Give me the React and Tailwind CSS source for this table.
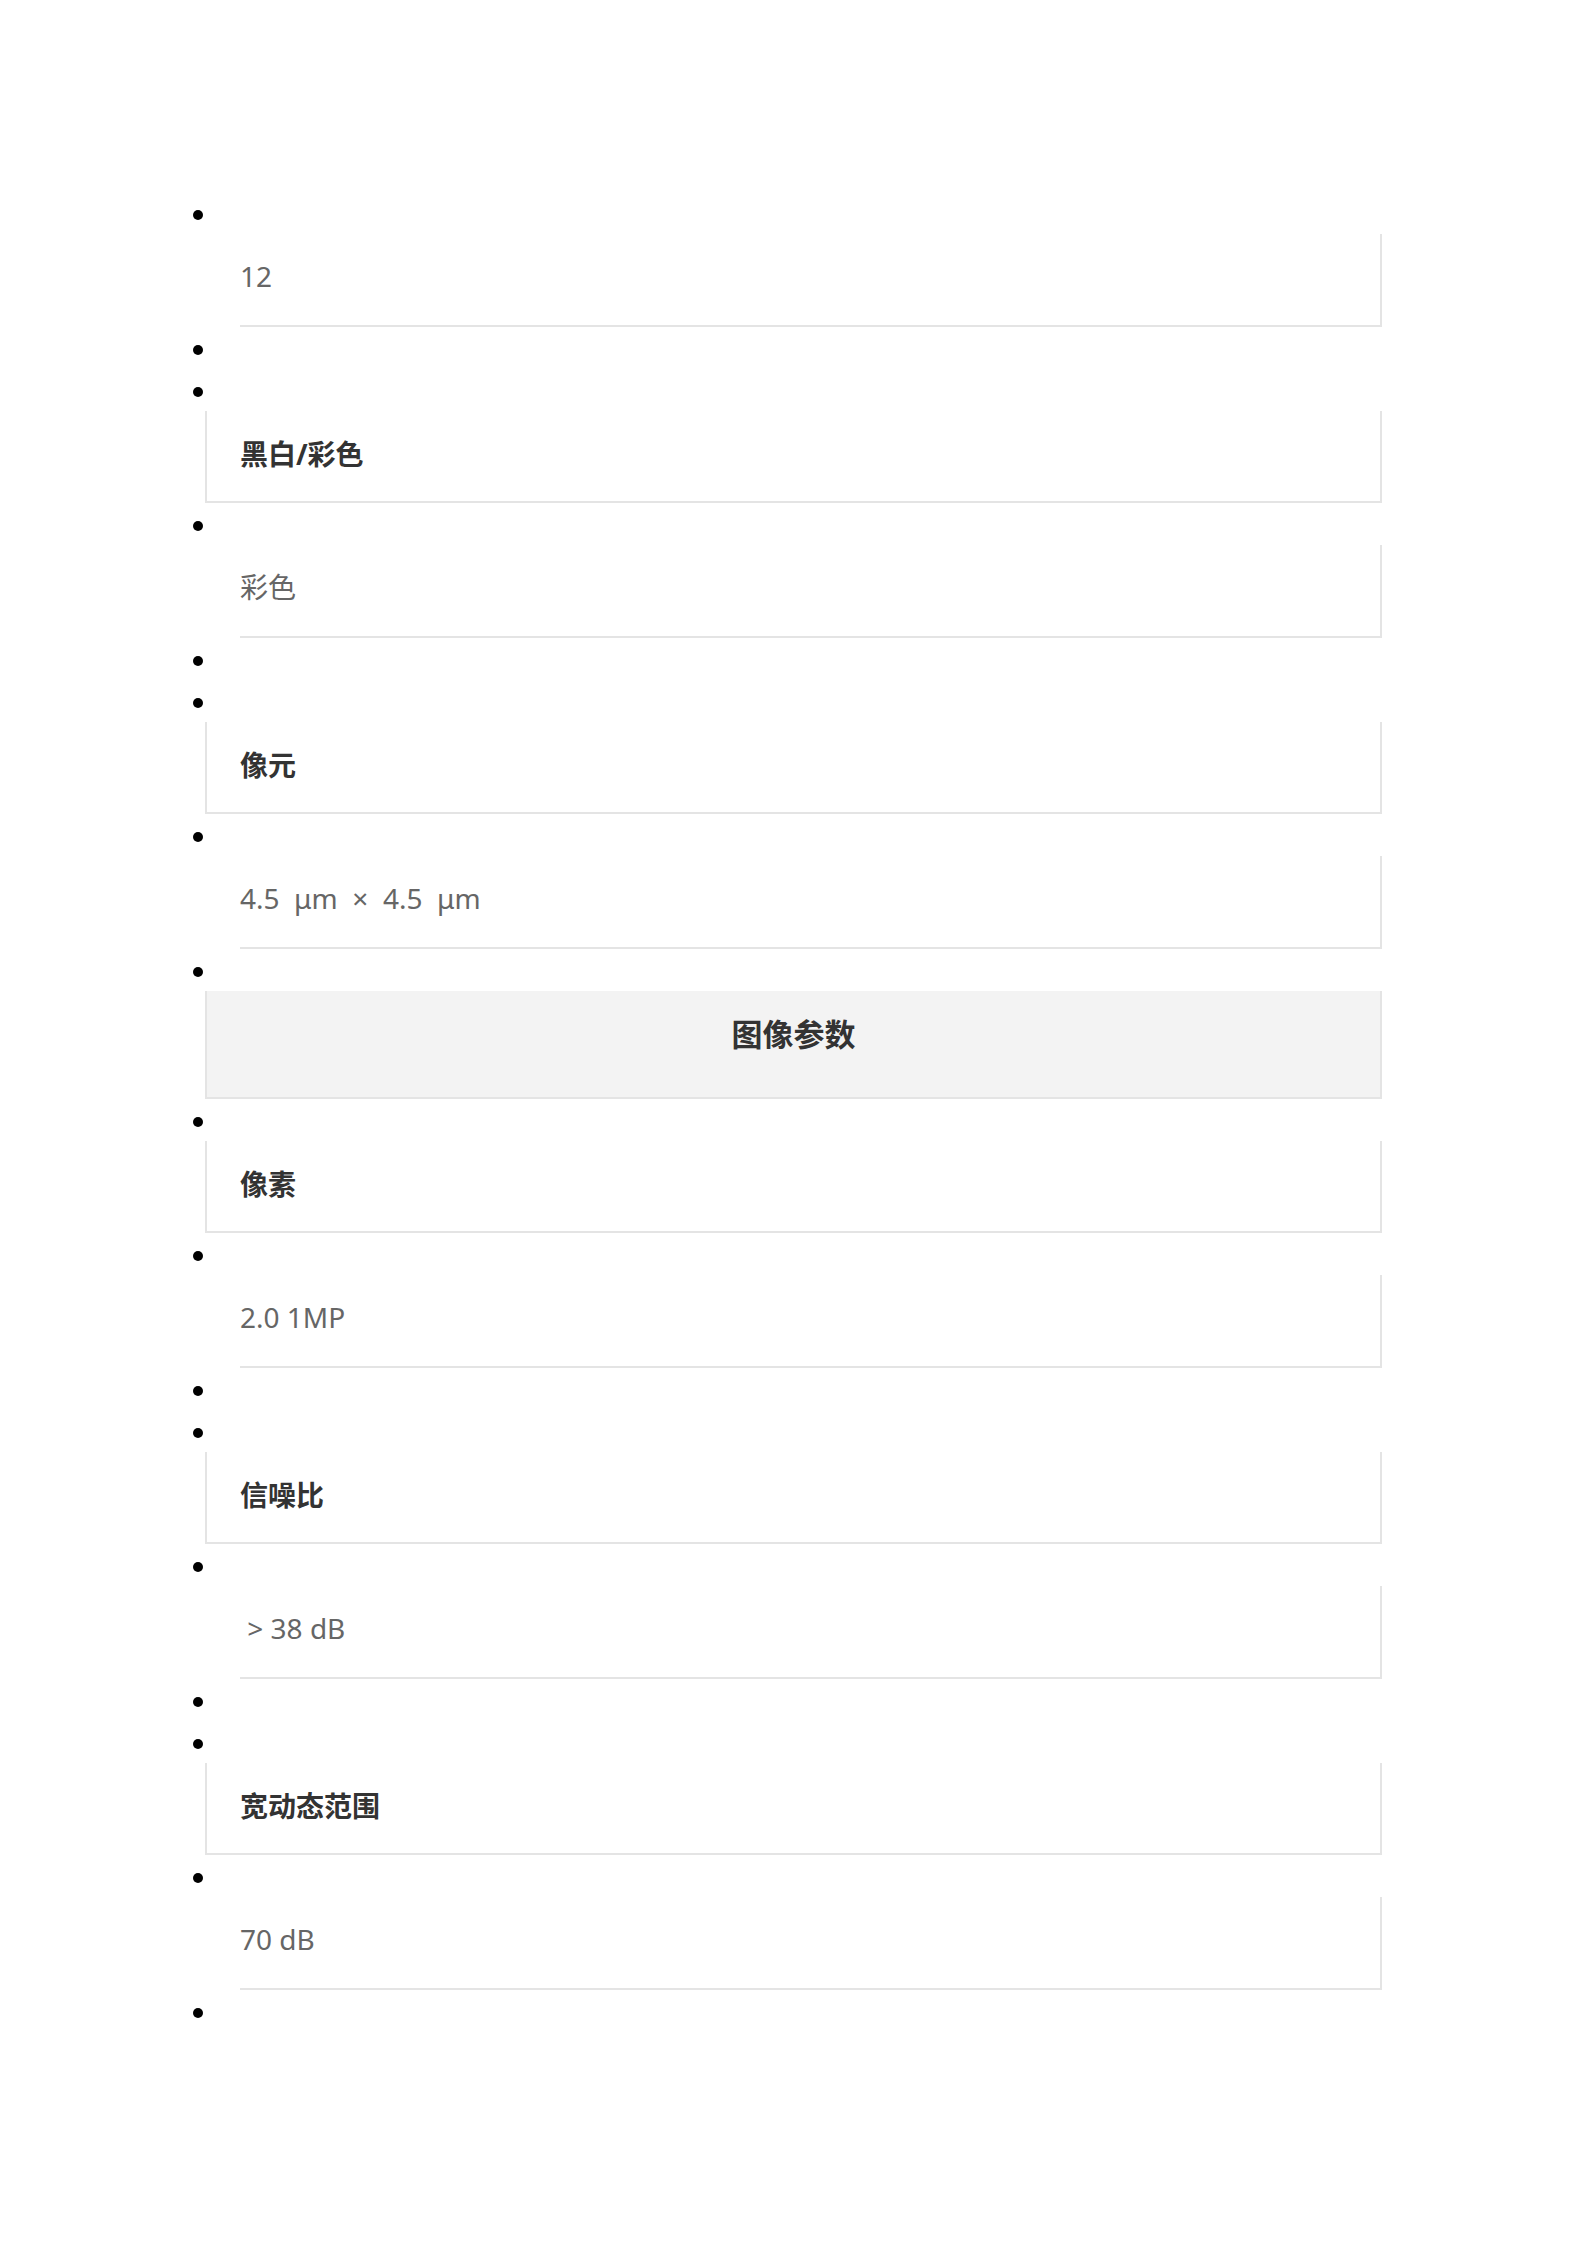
const rows = [
  { kind: "value", text: "12" },
  { kind: "empty" },
  { kind: "label", text: "黑白/彩色" },
  { kind: "value", text: "彩色" },
  { kind: "empty" },
  { kind: "label", text: "像元" },
  { kind: "value", text: "4.5\u00a0 μm\u00a0 ×\u00a0 4.5\u00a0 μm" },
  { kind: "section", text: "图像参数" },
  { kind: "label", text: "像素" },
  { kind: "value", text: "2.0 1MP" },
  { kind: "empty" },
  { kind: "label", text: "信噪比" },
  { kind: "value", text: "\u00a0> 38 dB" },
  { kind: "empty" },
  { kind: "label", text: "宽动态范围" },
  { kind: "value", text: "70 dB" },
  { kind: "empty" },
];

function Cell({ row }) {
  if (row.kind === "value") {
    return (
      <div className="ml-[47px] h-[92.5px] border-r-2 border-b-2 border-[#e4e4e4] flex items-center pb-[6px] text-[28px] text-[#666666]">
        {row.text}
      </div>
    );
  }
  if (row.kind === "label") {
    return (
      <div className="ml-[12px] h-[92.5px] border-l-2 border-r-2 border-b-2 border-[#e4e4e4] flex items-center pl-[33px] pb-[4px] text-[28px] font-bold text-[#333333]">
        {row.text}
      </div>
    );
  }
  if (row.kind === "section") {
    return (
      <div className="ml-[12px] h-[108px] border-l-2 border-r-2 border-b-2 border-[#e4e4e4] bg-[#f3f3f3] flex items-center justify-center pb-[18px] text-[31px] font-bold text-[#333333]">
        {row.text}
      </div>
    );
  }
  return null;
}

export default function App() {
  return (
    <div
      className="min-h-[2245px] w-[1587px] bg-white pt-[192px] pl-[193px]"
      style={{ fontFamily: '"Noto Sans", "Noto Sans CJK SC", sans-serif' }}
    >
      <ul className="w-[1189px] flex flex-col">
        {rows.map((row, i) => (
          <li key={i} className="flex flex-col">
            {/* marker line */}
            <div className="h-[42px]">
              <div className="mt-[18px] w-[10px] h-[10px] rounded-full bg-black" />
            </div>
            <Cell row={row} />
          </li>
        ))}
      </ul>
    </div>
  );
}
